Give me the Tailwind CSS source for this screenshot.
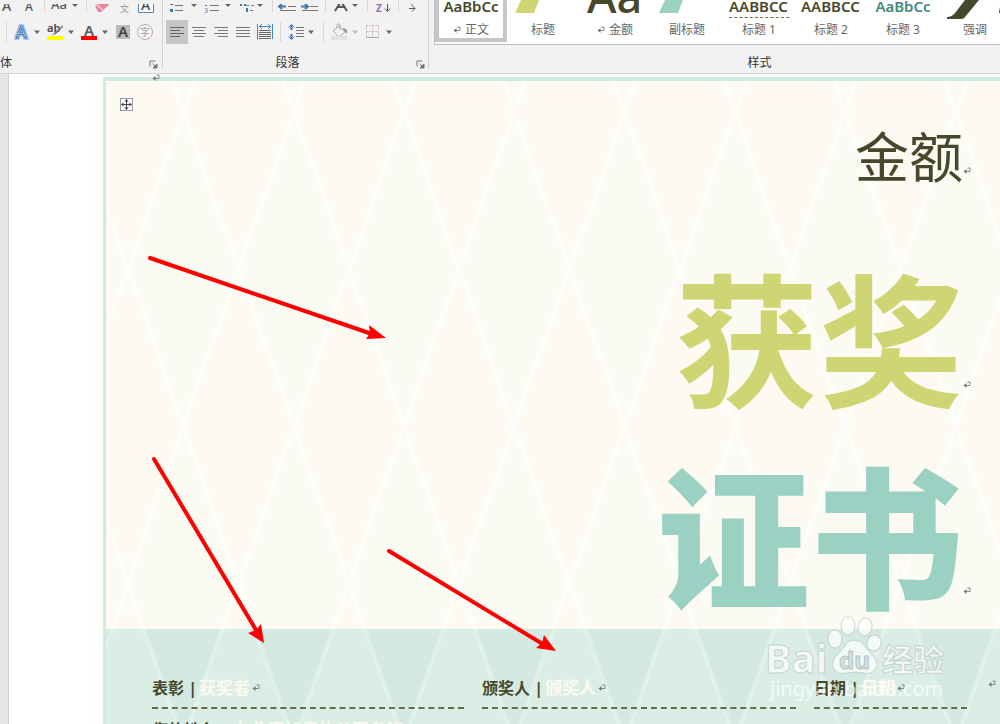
<!DOCTYPE html>
<html lang="zh-CN">
<head>
  <meta charset="UTF-8">
  <meta name="viewport" content="width=device-width, initial-scale=1.0">
  <title>获奖证书</title>
  <script src="https://cdn.jsdelivr.net/npm/@tailwindcss/browser@4"></script>
</head>
<body class="relative h-screen overflow-hidden flex flex-col bg-white font-['Noto_Sans','Noto_Sans_CJK_SC',sans-serif]">

  <svg class="hidden">
    <symbol id="caret" viewBox="0 0 10 24"><path d="M2 10.500h6l-3 3.500z" fill="currentColor"/></symbol>
    <symbol id="launcher" viewBox="0 0 9 9"><path d="M1 6.500V1h5.500" fill="none" stroke="#777"/><path d="M3.500 3.500L7 7M8 4v4H4z" fill="#777" stroke="#777"/></symbol>
    <symbol id="mark" viewBox="0 0 8 8"><path d="M4.500 1H7v3.500H2" fill="none" stroke="#888"/><path d="M0.500 4.500L3.500 2v5z" fill="#777"/></symbol>
  </svg>

  <!-- ribbon -->
  <header class="flex shrink-0 h-[74px] bg-[#f2f2f2] border-b border-[#d2d2d2] text-xs text-[#333]">

    <!-- font group -->
    <section class="w-[162px] shrink-0 flex flex-col">
      <div class="flex h-5">
        <button class="w-[18px]" aria-label="增大字号"><svg class="block h-3 w-[18px]"><text x="2" y="7" font-size="14" font-weight="500" fill="#555">A</text></svg></button>
        <button class="w-[26px]" aria-label="减小字号"><svg class="block h-3 w-[26px]"><text x="7" y="7" font-size="12" font-weight="500" fill="#555">A</text></svg></button>
        <span class="w-px h-3 bg-[#d8d8d8]"></span>
        <button class="w-[41px]" aria-label="更改大小写"><svg class="block h-3 w-[41px]"><text x="6" y="5" font-size="13" font-weight="500" fill="#555">Aa</text><path d="M27 0h6l-3 3z" fill="#666"/></svg></button>
        <span class="w-px h-3 bg-[#d8d8d8]"></span>
        <button class="w-[28px]" aria-label="清除格式"><svg class="block h-3 w-[28px]"><path d="M8 2l5-4h8l1 3-8 7h-3z" fill="#e8879a"/><path d="M10 1l6 5" stroke="#fff"/></svg></button>
        <button class="w-[20px]" aria-label="拼音指南"><svg class="block h-3 w-[20px]"><text x="5" y="8" font-size="9" fill="#999">文</text></svg></button>
        <button class="w-[22px]" aria-label="字符边框"><svg class="block h-3 w-[22px]"><path d="M3.500-2v10.500h15V-2" fill="#fff" stroke="#4f86c2"/><text x="6" y="6" font-size="14" font-weight="500" fill="#444">A</text></svg></button>
      </div>
      <div class="flex h-6 items-center text-[#666]">
        <span class="ml-[6px] mr-[7px] w-px h-5 bg-[#d8d8d8]"></span>
        <button aria-label="文本效果"><svg class="block w-[18px] h-6"><text x="2" y="18" font-size="16" font-weight="500" fill="#fff" stroke="#a9c9ea" stroke-width="4">A</text><text x="2" y="18" font-size="16" font-weight="500" fill="#fff" stroke="#3f79b5">A</text></svg></button>
        <button aria-label="文本效果选项"><svg class="block w-[10px] h-6"><use href="#caret"/></svg></button>
        <button class="ml-1" aria-label="突出显示"><svg class="block w-[20px] h-6"><text x="1" y="12" font-size="11" font-weight="600" fill="#444">ab</text><path d="M17 5L9 12l-3 3 4-1 7-7z" fill="#777"/><rect x="1" y="16" width="16" height="4" fill="#ff0"/></svg></button>
        <button aria-label="突出显示颜色"><svg class="block w-[12px] h-6"><path d="M2 10.500h6l-3 3.500z" fill="currentColor"/></svg></button>
        <button class="ml-[2px]" aria-label="字体颜色"><svg class="block w-[20px] h-6"><text x="4" y="16" font-size="15" font-weight="600" fill="#555">A</text><rect x="1" y="16" width="16" height="4" fill="#f00"/></svg></button>
        <button aria-label="字体颜色选项"><svg class="block w-[12px] h-6"><path d="M2 10.500h6l-3 3.500z" fill="currentColor"/></svg></button>
        <button aria-label="字符底纹"><svg class="block w-[22px] h-6"><rect x="4" y="5" width="14" height="14" fill="#b9b9b9"/><text x="6" y="17" font-size="15" font-weight="600" fill="#444">A</text></svg></button>
        <button aria-label="带圈字符"><svg class="block w-[22px] h-6"><circle cx="11" cy="12" r="7.500" fill="#faf7fa" stroke="#b7adb7"/><text x="6" y="16" font-size="10" fill="#999">字</text></svg></button>
      </div>
      <div class="flex flex-1 items-center justify-between pt-2">
        <span>体</span>
        <button class="mr-1 mt-1" aria-label="字体设置"><svg class="block w-[9px] h-[9px]"><use href="#launcher"/></svg></button>
      </div>
    </section>
    <span class="w-px h-[69px] bg-[#d2d2d2]"></span>

    <!-- paragraph group -->
    <section class="w-[265px] shrink-0 flex flex-col">
      <div class="flex h-5">
        <button aria-label="项目符号"><svg class="block h-3 w-[36px]"><path d="M7 0h3v1H7zM7 5h3v3H7z" fill="#3f79b5"/><path d="M12 1.500h8M12 6.500h8" stroke="#777"/><path d="M28 0h6l-3 3z" fill="#666"/></svg></button>
        <button aria-label="编号"><svg class="block h-3 w-[34px]"><text x="5" y="9" font-size="7" fill="#3f79b5">3</text><path d="M6 1.500h2" stroke="#3f79b5"/><path d="M11 1.500h9M11 6.500h9" stroke="#777"/><path d="M26 0h6l-3 3z" fill="#666"/></svg></button>
        <button aria-label="多级列表"><svg class="block h-3 w-[39px]"><path d="M8 0v2M11 1h2M14 4v4" stroke="#3f79b5" stroke-width="2"/><path d="M13 1.500h8M17 6.500h4" stroke="#777" stroke-dasharray="3 2"/><path d="M24 0h6l-3 3z" fill="#666"/></svg></button>
        <span class="w-px h-3 bg-[#d8d8d8]"></span>
        <button aria-label="减少缩进"><svg class="block h-3 w-[26px]"><path d="M6 2.500h7M9 0L6 2.500 9 5" fill="none" stroke="#3f79b5" stroke-width="2"/><path d="M15 2.500h8M7 6.500h16" stroke="#777"/></svg></button>
        <button aria-label="增加缩进"><svg class="block h-3 w-[26px]"><path d="M2 2.500h7M6 0l3 2.500L6 5" fill="none" stroke="#3f79b5" stroke-width="2"/><path d="M11 2.500h8M3 6.500h16" stroke="#777"/></svg></button>
        <span class="w-px h-3 bg-[#d8d8d8]"></span>
        <button aria-label="中文版式"><svg class="block h-3 w-[41px]"><path d="M9 7l5-8h2l5 8M11 3h8" fill="none" stroke="#555" stroke-width="2"/><path d="M26 0h6l-3 3z" fill="#666"/></svg></button>
        <span class="w-px h-3 bg-[#d8d8d8]"></span>
        <button aria-label="排序"><svg class="block h-3 w-[30px]"><text x="8" y="8" font-size="10" font-weight="bold" fill="#9a68b8">Z</text><path d="M19.500 0v7M17 4.500l2.500 3L22 4.500" fill="none" stroke="#555"/></svg></button>
        <span class="w-px h-3 bg-[#d8d8d8]"></span>
        <button aria-label="显示编辑标记"><svg class="block h-3 w-[22px]"><path d="M10 4.500h6M13 1.500l3 3-3 3M13 0v1" fill="none" stroke="#555"/></svg></button>
      </div>
      <div class="flex h-6 items-center text-[#666]">
        <button class="ml-[3px] bg-[#c6c6c6]" aria-label="左对齐"><svg class="block w-[22px] h-6"><path d="M4 7.500h14M4 10.500h10M4 13.500h14M4 16.500h10" stroke="#666"/></svg></button>
        <button aria-label="居中"><svg class="block w-[22px] h-6"><path d="M4 7.500h14M6 10.500h10M4 13.500h14M6 16.500h10" stroke="#777"/></svg></button>
        <button aria-label="右对齐"><svg class="block w-[22px] h-6"><path d="M4 7.500h14M8 10.500h10M4 13.500h14M8 16.500h10" stroke="#777"/></svg></button>
        <button aria-label="两端对齐"><svg class="block w-[22px] h-6"><path d="M4 7.500h14M4 10.500h14M4 13.500h14M4 16.500h14" stroke="#777"/></svg></button>
        <button aria-label="分散对齐"><svg class="block w-[22px] h-6"><path d="M3.500 4v15M18.500 4v15M5 6.500h12M8 4L5.500 6.500 8 9M14 4l2.500 2.500L14 9" fill="none" stroke="#3f87c8"/><path d="M5 10.500h12M5 12.500h12M5 14.500h12M5 16.500h12M5 18.500h12" stroke="#666"/></svg></button>
        <span class="ml-1 mr-[6px] w-px h-5 bg-[#d8d8d8]"></span>
        <button aria-label="行距"><svg class="block w-[19px] h-6"><path d="M4.500 5v5M4.500 14v5" stroke="#3f79b5" stroke-width="2"/><path d="M1.500 7.500l3-3 3 3M1.500 16.500l3 3 3-3" fill="none" stroke="#3f79b5"/><path d="M9 7.500h8M9 10.500h8M9 13.500h8M9 16.500h8" stroke="#777"/></svg></button>
        <button aria-label="行距选项"><svg class="block w-[10px] h-6"><use href="#caret"/></svg></button>
        <span class="ml-[7px] mr-[6px] w-px h-5 bg-[#d8d8d8]"></span>
        <button aria-label="底纹"><svg class="block w-[20px] h-6"><path d="M3 11l6-5 6 6-6 5z" fill="#f4eff4" stroke="#aaa"/><path d="M7 8V5q2-3 3 0v5" fill="none" stroke="#aaa"/><path d="M13 8q5 0 4 6-2-2-4-5z" fill="#999"/><rect x="1" y="16" width="16" height="4" fill="#e4dfe4"/></svg></button>
        <button class="text-[#bbb]" aria-label="底纹选项"><svg class="block w-[14px] h-6"><path d="M2 10.500h6l-3 3.500z" fill="currentColor"/></svg></button>
        <button aria-label="边框"><svg class="block w-[20px] h-6"><path d="M2.500 5.500h12v12M2.500 5.500v12M8.500 5.500v12M2.500 11.500h12" fill="none" stroke="#c9bcc9" stroke-dasharray="2 1"/><path d="M2 17.500h13" stroke="#aaa"/></svg></button>
        <button aria-label="边框选项"><svg class="block w-[10px] h-6"><use href="#caret"/></svg></button>
      </div>
      <div class="flex flex-1 items-center pt-2">
        <span class="flex-1 text-center pr-1">段落</span>
        <button class="mr-[3px] mt-1" aria-label="段落设置"><svg class="block w-[9px] h-[9px]"><use href="#launcher"/></svg></button>
      </div>
    </section>
    <span class="w-px h-[69px] bg-[#d2d2d2]"></span>

    <!-- style gallery -->
    <section class="flex-1 min-w-0 flex flex-col pl-[5px]">
      <div class="flex items-start h-[45px] overflow-hidden bg-white border-b border-l border-[#b9bec4] text-[#666]">
        <button class="w-[72px] h-[42px] shrink-0 flex flex-col items-center justify-start border-4 border-t-0 border-[#c6c6c6]">
          <span class="h-[21px] leading-[13px] text-[15px] font-semibold text-[#45482a]">AaBbCc</span>
          <span class="flex items-center gap-1 leading-[17px]"><svg class="w-2 h-2"><use href="#mark"/></svg>正文</span>
        </button>
        <button class="w-[72px] shrink-0 flex flex-col items-center">
          <svg class="block w-[72px] h-[21px]"><path d="M14 0h18l-5 13H8z" fill="#ced572"/></svg>
          <span class="leading-[17px]">标题</span>
        </button>
        <button class="w-[72px] shrink-0 flex flex-col items-center">
          <svg class="block w-[72px] h-[21px]"><text x="8" y="13" font-size="45" font-weight="500" fill="#45482a">Aa</text></svg>
          <span class="flex items-center gap-1 leading-[17px]"><svg class="w-2 h-2"><use href="#mark"/></svg>金额</span>
        </button>
        <button class="w-[72px] shrink-0 flex flex-col items-center">
          <svg class="block w-[72px] h-[21px]"><path d="M14 0h18l-5 13H8z" fill="#9ad1c3"/></svg>
          <span class="leading-[17px]">副标题</span>
        </button>
        <button class="w-[72px] shrink-0 flex flex-col items-center">
          <span class="h-[21px] w-[60px] overflow-hidden"><span class="block h-[18px] leading-[13px] text-[15px] text-left font-semibold text-[#45482a] border-b border-dashed border-[#6b6b45]">AABBCC</span></span>
          <span class="leading-[17px]">标题 1</span>
        </button>
        <button class="w-[72px] shrink-0 flex flex-col items-center">
          <span class="h-[21px] w-[60px] overflow-hidden leading-[13px] text-[15px] text-left font-semibold text-[#45482a]">AABBCC</span>
          <span class="leading-[17px]">标题 2</span>
        </button>
        <button class="w-[72px] shrink-0 flex flex-col items-center">
          <span class="h-[21px] leading-[13px] text-[15px] font-semibold text-[#43897c]">AaBbCc</span>
          <span class="leading-[17px]">标题 3</span>
        </button>
        <button class="w-[72px] shrink-0 flex flex-col items-center">
          <svg class="block w-[72px] h-[21px]"><path d="M26 0h14L26 17q-1 2-4 2H8v-2q5 0 8-4z" fill="#45482a"/><path d="M62 0h8v13H60z" fill="#45482a"/></svg>
          <span class="leading-[17px]">强调</span>
        </button>
      </div>
      <div class="flex flex-1 items-center justify-center pt-2 pl-[85px]">样式</div>
    </section>
  </header>

  <!-- document -->
  <main class="flex flex-1 min-h-0">
    <div class="w-[9px] shrink-0 bg-[#e6e6e6] border-r border-[#d0d0d0]"></div>
    <div class="w-[81px] shrink-0"></div>
    <div class="flex-1 min-w-0 flex bg-[#fefefa] pl-[13px] pt-[3px]">
      <article class="relative flex-1 min-w-0 flex flex-col border-l-[3px] border-t-4 border-[#d0e9e2] bg-[#fdfaf2] text-[#45482a]">

        <svg class="absolute inset-0 w-full h-full">
          <defs>
            <pattern id="tint" patternUnits="userSpaceOnUse" x="22" y="31" width="331" height="314">
              <path d="M55 0l55 157-55 157L0 157zM166 0l55 157-55 157-56-157zM276 0l55 157-55 157-55-157z" fill="#fbfbf4"/>
            </pattern>
            <pattern id="mint" patternUnits="userSpaceOnUse" x="22" y="31" width="331" height="314">
              <path d="M0 0h331v314H0z" fill="#dbeee6"/>
              <path d="M55 0l55 157-55 157L0 157zM166 0l55 157-55 157-56-157zM276 0l55 157-55 157-55-157z" fill="#d3e9e2"/>
            </pattern>
            <pattern id="lattice" patternUnits="userSpaceOnUse" x="22" y="31" width="331" height="314">
              <path d="M-55 0L55 314M55 0l111 314M166 0l110 314M276 0l110 314M55 0L-55 314M166 0L55 314M276 0L166 314M386 0L276 314" fill="none" stroke="#fff" stroke-width="4"/>
            </pattern>
          </defs>
          <rect width="100%" height="548" fill="url(#tint)"/>
          <rect y="548" width="100%" height="100%" fill="url(#mint)"/>
          <rect width="100%" height="548" fill="url(#lattice)" opacity="0.6"/>
          <rect y="548" width="100%" height="100%" fill="url(#lattice)" opacity="0.25"/>
        </svg>
        <svg class="absolute -top-[7px] left-[46px] w-2 h-2"><use href="#mark"/></svg>
        <button class="absolute top-[17px] left-[14px] bg-white border border-[#999]" aria-label="选择表格">
          <svg class="block w-[11px] h-[11px]"><path d="M5.500 1v9M1 5.500h9" stroke="#444"/><path d="M5.500 0l2 2.500h-4zM5.500 11l2-2.500h-4zM0 5.500l2.500-2v4zM11 5.500l-2.500-2v4z" fill="#444"/></svg>
        </button>

        <div class="relative shrink-0 flex flex-col pr-[29px]">
          <p class="flex justify-end items-end text-[54px] leading-[152px]">金额<svg class="w-2 h-2 mb-[58px]"><use href="#mark"/></svg></p>
          <h1 class="flex justify-end items-end text-[144px] leading-[216px] font-bold text-[#ced572]">获奖<svg class="w-2 h-2 mb-[60px]"><use href="#mark"/></svg></h1>
          <h1 class="flex justify-end items-end text-[153px] leading-[180px] font-black text-[#9ad1c3]">证书<svg class="w-2 h-2 mb-[34px]"><use href="#mark"/></svg></h1>
        </div>

        <div class="relative flex-1 pl-[46px] pr-[33px] pt-[46px] font-bold">
          <div class="grid grid-cols-[312fr_314fr_153fr] gap-x-[18px]">
            <p class="flex items-center gap-[2px] h-[34px] pb-[6px] text-base leading-[24px] border-b-2 border-dashed border-[#6b6b45]"><span>表彰 |</span><span class="text-[17px] text-[#fdf9f0]">获奖者</span><svg class="w-2 h-2"><use href="#mark"/></svg></p>
            <p class="flex items-center gap-[2px] h-[34px] pb-[6px] text-base leading-[24px] border-b-2 border-dashed border-[#6b6b45]"><span>颁奖人 |</span><span class="text-[17px] text-[#fdf9f0]">颁奖人</span><svg class="w-2 h-2"><use href="#mark"/></svg></p>
            <p class="flex items-center gap-[2px] h-[34px] pb-[6px] text-base leading-[24px] border-b-2 border-dashed border-[#6b6b45]"><span>日期 |</span><span class="text-[17px] text-[#fdf9f0]">日期</span><svg class="w-2 h-2"><use href="#mark"/></svg></p>
          </div>
          <p class="mt-[9px] h-6 overflow-hidden text-base leading-[24px]">您的姓名 | <span class="text-[17px] text-[#fdf9f0]">在此添加您的公司名称</span></p>
          <svg class="absolute right-1 top-[51px] w-2 h-2"><use href="#mark"/></svg>
        </div>
      </article>
    </div>
  </main>

  <!-- watermark -->
  <svg class="absolute left-[760px] top-[612px] w-[200px] h-[96px] pointer-events-none" viewBox="0 0 200 96">
    <g fill="#fff" fill-opacity="0.7" stroke="#b8c4c0" stroke-opacity="0.7">
      <text x="5" y="61" font-size="40" font-weight="bold">Bai</text>
      <ellipse cx="75" cy="27" rx="7" ry="9"/>
      <ellipse cx="88" cy="14" rx="7" ry="9"/>
      <ellipse cx="105" cy="15" rx="7" ry="9" transform="rotate(10 105 15)"/>
      <ellipse cx="114" cy="31" rx="7" ry="8" transform="rotate(15 114 31)"/>
      <path d="M94 28q-6 0-10 7l-8 9q-6 8-2 13 4 6 12 4 9-2 17 0 10 2 13-5 3-7-4-13-5-5-8-10-4-5-10-5z"/>
      <text x="122" y="59" font-size="31" font-weight="bold">经验</text>
    </g>
    <text x="79" y="57" font-size="24" font-weight="bold" fill="#d3e3df" stroke="#b3c3bf">du</text>
    <text x="10" y="84" font-size="20" fill="#fff" fill-opacity="0.7">jingyan.baidu.com</text>
  </svg>

  <!-- arrows -->
  <svg class="absolute left-0 top-0 w-[600px] h-[724px] pointer-events-none" viewBox="0 0 600 724">
    <path d="M150 258L372 334M154 459l102 171M389 551l152 92" stroke="#f00" stroke-width="4" stroke-linecap="round"/>
    <path d="M386 338l-20 1 4-6-1-8zM264 643l-16-10 8-3 5-6zM556 651l-20-3 6-5 2-8z" fill="#f00"/>
  </svg>
</body>
</html>
